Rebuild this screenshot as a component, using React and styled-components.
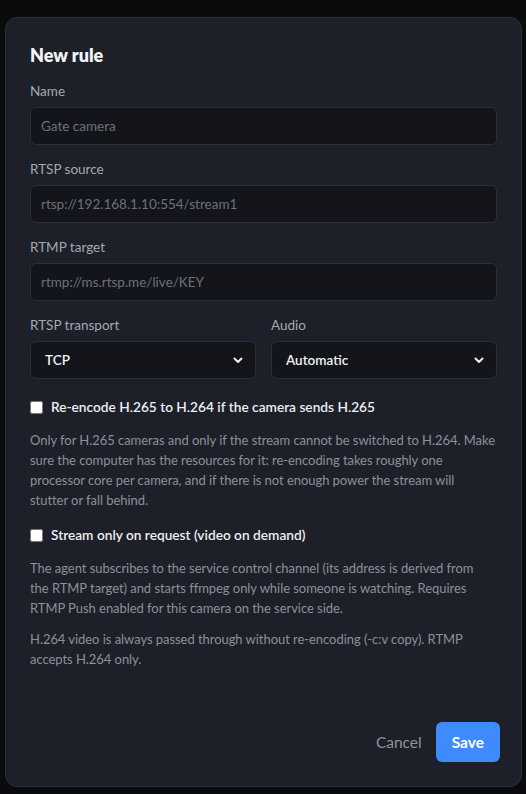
import React from 'react';
import styled, { createGlobalStyle } from 'styled-components';

const GlobalStyle = createGlobalStyle`
  html, body {
    margin: 0;
    background: #0a0b0d;
  }
  body {
    font-family: Lato, "Noto Sans", sans-serif;
    color: #e6e8ec;
  }
  * {
    box-sizing: border-box;
  }
`;

const Backdrop = styled.div`
  height: 794px;
  padding: 17px 4px 7px 5px;
  display: flex;
`;

const Dialog = styled.form`
  flex: 1;
  display: flex;
  flex-direction: column;
  background: #1d2029;
  border: 1px solid #2a2e38;
  border-radius: 12px;
  padding: 25px 24px 24px 24px;
`;

const Title = styled.h2`
  margin: 0;
  font-size: 18px;
  line-height: 24px;
  font-weight: 800;
  color: #f1f3f6;
`;

const Field = styled.div`
  display: flex;
  flex-direction: column;
  gap: 7px;
  margin-top: ${p => p.$top || 15}px;
  min-width: 0;
`;

const Label = styled.label`
  font-size: 13.5px;
  line-height: 18px;
  color: #a3a8b1;
`;

const Input = styled.input`
  height: 38px;
  width: 100%;
  background: #13151b;
  border: 1px solid #2a2e38;
  border-radius: 6px;
  padding: 0 10px;
  font: inherit;
  font-size: 13.5px;
  color: #e6e8ec;
  outline: none;
  &::placeholder {
    color: #6c717b;
  }
`;

const Row = styled.div`
  display: grid;
  grid-template-columns: 1fr 1fr;
  gap: 15px;
`;

const SelectWrap = styled.div`
  position: relative;
  svg {
    position: absolute;
    right: 12px;
    top: 50%;
    transform: translateY(-50%);
    pointer-events: none;
  }
`;

const Select = styled.select`
  appearance: none;
  height: 38px;
  width: 100%;
  background: #13151b;
  border: 1px solid #2a2e38;
  border-radius: 6px;
  padding: 0 14px;
  font: inherit;
  font-size: 13.5px;
  font-weight: 600;
  color: #eef0f3;
  outline: none;
`;

const Check = styled.label`
  display: flex;
  align-items: center;
  gap: 8px;
  margin-top: ${p => p.$top}px;
  font-size: 13.7px;
  line-height: 20px;
  font-weight: 600;
  color: #eceef1;
  input {
    margin: 0;
    width: 13px;
    height: 13px;
  }
`;

const Hint = styled.p`
  margin: ${p => p.$top}px 0 0;
  font-size: 13px;
  line-height: 20px;
  letter-spacing: -0.05px;
  color: #8b909a;
`;

const Footer = styled.div`
  margin-top: auto;
  margin-right: -3px;
  display: flex;
  justify-content: flex-end;
  align-items: center;
`;

const Button = styled.button`
  height: 40px;
  border: none;
  border-radius: 6px;
  padding: 0 ${p => (p.$primary ? 16 : 14)}px;
  font: inherit;
  font-size: 15.5px;
  font-weight: ${p => (p.$primary ? 700 : 400)};
  background: ${p => (p.$primary ? '#3d8bfd' : 'transparent')};
  color: ${p => (p.$primary ? '#ffffff' : '#8d929b')};
`;

const Chevron = () => (
  <svg width="12" height="12" viewBox="0 0 12 12" fill="none">
    <path d="M2.5 4.5 6 8l3.5-3.5" stroke="#eef0f3" strokeWidth="2" strokeLinecap="round" strokeLinejoin="round" />
  </svg>
);

export default function App() {
  return (
    <>
      <GlobalStyle />
      <Backdrop>
        <Dialog onSubmit={e => e.preventDefault()}>
          <Title>New rule</Title>

          <Field $top={15}>
            <Label>Name</Label>
            <Input placeholder="Gate camera" />
          </Field>
          <Field>
            <Label>RTSP source</Label>
            <Input placeholder="rtsp://192.168.1.10:554/stream1" />
          </Field>
          <Field>
            <Label>RTMP target</Label>
            <Input placeholder="rtmp://ms.rtsp.me/live/KEY" />
          </Field>

          <Row>
            <Field>
              <Label>RTSP transport</Label>
              <SelectWrap>
                <Select defaultValue="tcp">
                  <option value="tcp">TCP</option>
                  <option value="udp">UDP</option>
                </Select>
                <Chevron />
              </SelectWrap>
            </Field>
            <Field>
              <Label>Audio</Label>
              <SelectWrap>
                <Select defaultValue="auto">
                  <option value="auto">Automatic</option>
                  <option value="off">Off</option>
                </Select>
                <Chevron />
              </SelectWrap>
            </Field>
          </Row>

          <Check $top={18}>
            <input type="checkbox" />
            Re-encode H.265 to H.264 if the camera sends H.265
          </Check>
          <Hint $top={13}>
            Only for H.265 cameras and only if the stream cannot be switched to H.264. Make
            <br />
            sure the computer has the resources for it: re-encoding takes roughly one
            <br />
            processor core per camera, and if there is not enough power the stream will
            <br />
            stutter or fall behind.
          </Hint>

          <Check $top={15}>
            <input type="checkbox" />
            Stream only on request (video on demand)
          </Check>
          <Hint $top={13}>
            The agent subscribes to the service control channel (its address is derived from
            <br />
            the RTMP target) and starts ffmpeg only while someone is watching. Requires
            <br />
            RTMP Push enabled for this camera on the service side.
          </Hint>
          <Hint $top={11}>
            H.264 video is always passed through without re-encoding (-c:v copy). RTMP
            <br />
            accepts H.264 only.
          </Hint>

          <Footer>
            <Button type="button">Cancel</Button>
            <Button type="submit" $primary>Save</Button>
          </Footer>
        </Dialog>
      </Backdrop>
    </>
  );
}
